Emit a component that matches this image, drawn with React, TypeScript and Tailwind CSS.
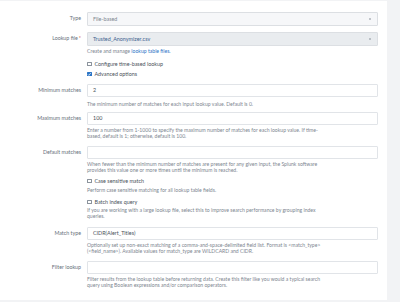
import React from 'react';

const font = { fontFamily: 'Lato, "Open Sans", sans-serif' };

function Label({ text, required }: { text: string; required?: boolean }) {
  return (
    <div className="w-[87px] shrink-0 pr-[6px] text-right text-[5.3px] leading-[13px] text-[#68717b]">
      {text}
      {required && <span className="ml-[1px] text-[#d6563c]">*</span>}
    </div>
  );
}

function Help({ children, className = '' }: { children: React.ReactNode; className?: string }) {
  return <div className={`text-[5.1px] leading-[6px] text-[#7d8690] ${className}`}>{children}</div>;
}

function TextInput({ value }: { value?: string }) {
  return (
    <div className="flex h-[13px] w-[291px] items-center rounded-[1px] border border-[#e1e4e8] bg-white pl-[5px] text-[5.4px] text-[#4a525b]">
      {value}
    </div>
  );
}

function Select({ value, dark }: { value: string; dark?: boolean }) {
  return (
    <div
      className={
        'flex h-[14px] w-[291px] items-center justify-between rounded-[1px] border border-[#dcdfe3] pl-[5px] pr-[6px] text-[5.4px] ' +
        (dark ? 'bg-[#e9ecef] text-[#3f6390]' : 'bg-[#f6f7f9] text-[#7d8690]')
      }
    >
      <span>{value}</span>
      <span className="flex flex-col items-center gap-[0.5px]">
        <span className="h-0 w-0 border-x-[1.5px] border-b-[1.5px] border-x-transparent border-b-[#8a929b]" />
        <span className="h-0 w-0 border-x-[1.5px] border-t-[1.5px] border-x-transparent border-t-[#8a929b]" />
      </span>
    </div>
  );
}

function Check({ label, checked }: { label: string; checked?: boolean }) {
  return (
    <div className="flex h-[6px] items-center gap-[3px] text-[5.4px] text-[#4a525b]">
      {checked ? (
        <span className="flex h-[4.5px] w-[4.5px] items-center justify-center rounded-[0.5px] bg-[#2a74c6]">
          <svg viewBox="0 0 8 8" className="h-[4.5px] w-[4.5px]">
            <path d="M1.5 4.2 L3.3 6 L6.6 2" fill="none" stroke="white" strokeWidth="1.3" />
          </svg>
        </span>
      ) : (
        <span className="h-[4.5px] w-[4.5px] rounded-[0.5px] border-[0.6px] border-[#8b939c] bg-white" />
      )}
      <span>{label}</span>
    </div>
  );
}

function Row({ label, required, children, className = '' }: { label?: string; required?: boolean; children: React.ReactNode; className?: string }) {
  return (
    <div className={`flex ${className}`}>
      {label ? <Label text={label} required={required} /> : <div className="w-[87px] shrink-0" />}
      <div className="flex flex-col">{children}</div>
    </div>
  );
}

export default function App() {
  return (
    <div className="flex h-[302px] w-[400px] overflow-hidden bg-[#f2f3f5]" style={font}>
      <div className="mt-[1px] h-[299px] w-[387px] bg-white pt-[11px]">
        <Row label="Type">
          <Select value="File-based" />
        </Row>
        <Row label="Lookup file" required className="mt-[6px]">
          <Select value="Trusted_Anonymizer.csv" dark />
          <Help className="mt-[2px]">
            Create and manage <span className="text-[#2a74c6]">lookup table files.</span>
          </Help>
        </Row>
        <Row className="mt-[7px]">
          <Check label="Configure time-based lookup" />
        </Row>
        <Row className="mt-[4px]">
          <Check label="Advanced options" checked />
        </Row>
        <Row label="Minimum matches" className="mt-[7px]">
          <TextInput value="2" />
          <Help className="mt-[4px]">The minimum number of matches for each input lookup value. Default is 0.</Help>
        </Row>
        <Row label="Maximum matches" className="mt-[5px]">
          <TextInput value="100" />
          <Help className="mt-[2px]">
            Enter a number from 1-1000 to specify the maximum number of matches for each lookup value. If time-
            <br />
            based, default is 1; otherwise, default is 100.
          </Help>
        </Row>
        <Row label="Default matches" className="mt-[7px]">
          <TextInput />
          <Help className="mt-[2px]">
            When fewer than the minimum number of matches are present for any given input, the Splunk software
            <br />
            provides this value one or more times until the minimum is reached.
          </Help>
        </Row>
        <Row className="mt-[5px]">
          <Check label="Case sensitive match" />
          <Help className="mt-[3px]">Perform case sensitive matching for all lookup table fields.</Help>
        </Row>
        <Row className="mt-[6px]">
          <Check label="Batch index query" />
          <Help className="mt-[2px]">
            If you are working with a large lookup file, select this to improve search performance by grouping index
            <br />
            queries.
          </Help>
        </Row>
        <Row label="Match type" className="mt-[8px]">
          <TextInput value="CIDR(Alert_Titles)" />
          <Help className="mt-[2px]">
            Optionally set up non-exact matching of a comma-and-space-delimited field list. Format is &lt;match_type&gt;
            <br />
            (&lt;field_name&gt;). Available values for match_type are WILDCARD and CIDR.
          </Help>
        </Row>
        <Row label="Filter lookup" className="mt-[7px]">
          <TextInput />
          <Help className="mt-[2px]">
            Filter results from the lookup table before returning data. Create this filter like you would a typical search
            <br />
            query using Boolean expressions and/or comparison operators.
          </Help>
        </Row>
      </div>
    </div>
  );
}
